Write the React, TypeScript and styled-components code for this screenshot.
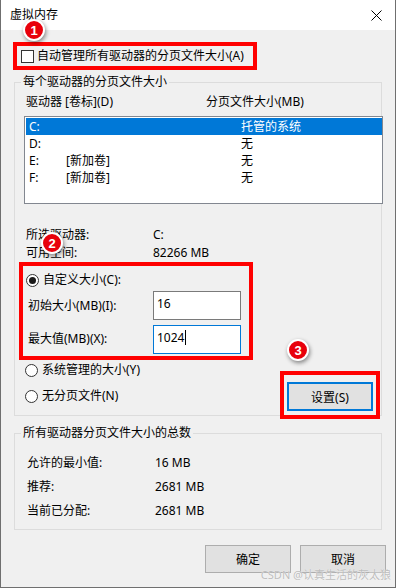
import styled, { createGlobalStyle } from 'styled-components'

const GlobalStyle = createGlobalStyle`
  html, body {
    margin: 0;
    padding: 0;
    background: #ffffff;
  }
  body {
    font-family: "Noto Sans", "Noto Sans CJK SC", sans-serif;
    font-size: 12px;
    color: #000;
  }
  * {
    box-sizing: border-box;
  }
`

const drives = [
  { letter: 'C:', label: '', size: '托管的系统', selected: true },
  { letter: 'D:', label: '', size: '无', selected: false },
  { letter: 'E:', label: '[新加卷]', size: '无', selected: false },
  { letter: 'F:', label: '[新加卷]', size: '无', selected: false },
]

const totals = [
  { label: '允许的最小值:', value: '16 MB' },
  { label: '推荐:', value: '2681 MB' },
  { label: '当前已分配:', value: '2681 MB' },
]

// numbered callouts drawn over the dialog
const badges = [
  { n: 1, x: 22, y: 19 },
  { n: 2, x: 40, y: 232 },
  { n: 3, x: 286, y: 339 },
]

const CloseIcon = () => (
  <svg width="11" height="11" viewBox="0 0 11 11">
    <path d="M0.5 0.5 L10.5 10.5 M10.5 0.5 L0.5 10.5" stroke="#000" strokeWidth="1" fill="none" />
  </svg>
)

const Radio = ({ checked }: { checked?: boolean }) => (
  <RadioCircle>{checked && <RadioDot />}</RadioCircle>
)

const App = () => {
  return (
    <>
      <GlobalStyle />
      <Window>
        <TitleBar>
          <Title>虚拟内存</Title>
          <CloseButton><CloseIcon /></CloseButton>
        </TitleBar>

        <Body>
          <CheckWrap>
            <CheckBox />
            <span>自动管理所有驱动器的分页文件大小(A)</span>
          </CheckWrap>

          <Group $top={16}>
            <Legend>每个驱动器的分页文件大小</Legend>
            <HeaderRow>
              <span>驱动器 [卷标](D)</span>
              <span>分页文件大小(MB)</span>
            </HeaderRow>
            <ListBox>
              {drives.map((d) => (
                <DriveRow key={d.letter} $selected={d.selected}>
                  <span>{d.letter}</span>
                  <span>{d.label}</span>
                  <span>{d.size}</span>
                </DriveRow>
              ))}
            </ListBox>

            <InfoGrid>
              <span>所选驱动器:</span>
              <span>C:</span>
              <span>可用空间:</span>
              <span>82266 MB</span>
            </InfoGrid>

            <CustomBox>
              <RadioRow>
                <Radio checked />
                <span>自定义大小(C):</span>
              </RadioRow>
              <FieldRow>
                <span>初始大小(MB)(I):</span>
                <Field>16</Field>
              </FieldRow>
              <FieldRow>
                <span>最大值(MB)(X):</span>
                <Field $focused>1024<Caret /></Field>
              </FieldRow>
            </CustomBox>

            <BottomRow>
              <RadioColumn>
                <RadioRow>
                  <Radio />
                  <span>系统管理的大小(Y)</span>
                </RadioRow>
                <RadioRow>
                  <Radio />
                  <span>无分页文件(N)</span>
                </RadioRow>
              </RadioColumn>
              <SetWrap>
                <SetButton>设置(S)</SetButton>
              </SetWrap>
            </BottomRow>
          </Group>

          <Group $top={17}>
            <Legend>所有驱动器分页文件大小的总数</Legend>
            <TotalsGrid>
              {totals.map((t) => (
                <TotalRow key={t.label}>
                  <span>{t.label}</span>
                  <span>{t.value}</span>
                </TotalRow>
              ))}
            </TotalsGrid>
          </Group>

          <ButtonRow>
            <DialogButton>确定</DialogButton>
            <DialogButton>取消</DialogButton>
          </ButtonRow>
        </Body>

        {badges.map((b) => (
          <Badge key={b.n} $x={b.x} $y={b.y}>{b.n}</Badge>
        ))}
        <Watermark>CSDN @认真生活的灰太狼</Watermark>
      </Window>
    </>
  )
}

const {
  Window, TitleBar, Title, CloseButton, Body, CheckWrap, CheckBox, Group, Legend,
  HeaderRow, ListBox, DriveRow, InfoGrid, CustomBox, RadioRow, RadioCircle, RadioDot,
  FieldRow, Field, Caret, BottomRow, RadioColumn, SetWrap, SetButton, TotalsGrid,
  TotalRow, ButtonRow, DialogButton, Badge, Watermark,
} = {
  Window: styled.div`
    position: relative;
    width: 396px;
    height: 588px;
    display: flex;
    flex-direction: column;
    background: #f0f0f0;
    border: 1px solid #6f6f6f;
    border-top: none;
    overflow: hidden;
  `,
  TitleBar: styled.div`
    height: 30px;
    flex: none;
    display: flex;
    align-items: center;
    justify-content: space-between;
    background: #ffffff;
    padding: 0 9px 0 9px;
  `,
  Title: styled.div`
    font-size: 12px;
    line-height: 16px;
  `,
  CloseButton: styled.div`
    width: 11px;
    height: 11px;
    display: flex;
    margin-right: 4px;
  `,
  Body: styled.div`
    flex: 1;
    display: flex;
    flex-direction: column;
    padding: 0 13px;
  `,
  CheckWrap: styled.div`
    margin: 16px 0 0 3px;
    width: 236px;
    height: 20px;
    display: flex;
    align-items: center;
    gap: 3px;
    padding-left: 4px;
    line-height: 16px;
    outline: 4px solid #ff0000;
  `,
  CheckBox: styled.div`
    width: 13px;
    height: 13px;
    border: 1px solid #333333;
    background: #ffffff;
    flex: none;
  `,
  Group: styled.div<{ $top: number }>`
    margin-top: ${(p) => p.$top}px;
    display: flex;
    flex-direction: column;
    border: 1px solid #dcdcdc;
  `,
  Legend: styled.div`
    align-self: flex-start;
    margin: -9px 0 0 6px;
    padding: 0 2px;
    background: #f0f0f0;
    line-height: 16px;
  `,
  HeaderRow: styled.div`
    margin-top: 4px;
    height: 16px;
    line-height: 16px;
    padding-left: 11px;
    display: grid;
    grid-template-columns: 180px 1fr;
  `,
  ListBox: styled.div`
    margin: 6px 0 0 9px;
    width: 359px;
    height: 88px;
    flex: none;
    background: #ffffff;
    border: 1px solid #828790;
    padding: 1px 0 0 1px;
  `,
  DriveRow: styled.div<{ $selected?: boolean }>`
    height: 17px;
    line-height: 17px;
    padding-left: 3px;
    display: grid;
    grid-template-columns: 37px 175px 1fr;
    background: ${(p) => (p.$selected ? '#0078d7' : 'transparent')};
    color: ${(p) => (p.$selected ? '#ffffff' : '#000000')};
  `,
  InfoGrid: styled.div`
    margin-top: 22px;
    padding-left: 11px;
    display: grid;
    grid-template-columns: 127px 1fr;
    grid-auto-rows: 18px;
    line-height: 18px;
  `,
  CustomBox: styled.div`
    margin-left: 4px;
    width: 234px;
    height: 98px;
    border: 4px solid #ff0000;
    display: flex;
    flex-direction: column;
    padding: 6px 8px 0 3px;
  `,
  RadioRow: styled.div`
    height: 16px;
    display: flex;
    align-items: center;
    gap: 4px;
    line-height: 16px;
  `,
  RadioCircle: styled.div`
    width: 13px;
    height: 13px;
    border-radius: 50%;
    border: 1px solid #333333;
    background: #ffffff;
    display: flex;
    align-items: center;
    justify-content: center;
    flex: none;
  `,
  RadioDot: styled.div`
    width: 7px;
    height: 7px;
    border-radius: 50%;
    background: #1a1a1a;
  `,
  FieldRow: styled.div`
    margin-top: 1px;
    height: 34px;
    display: grid;
    grid-template-columns: 125px 88px;
    align-items: center;
    padding-left: 2px;
    line-height: 16px;
    & + & {
      margin-top: 0;
    }
  `,
  Field: styled.div<{ $focused?: boolean }>`
    height: 29px;
    display: flex;
    align-items: center;
    padding: 0 0 3px 3px;
    background: #ffffff;
    border: 1px solid ${(p) => (p.$focused ? '#0078d7' : '#7a7a7a')};
    font-size: 12px;
  `,
  Caret: styled.span`
    display: inline-block;
    width: 1px;
    height: 15px;
    background: #000;
    margin-left: 1px;
  `,
  BottomRow: styled.div`
    display: flex;
    justify-content: space-between;
    align-items: flex-start;
    padding: 0 5px 0 10px;
  `,
  RadioColumn: styled.div`
    margin-top: 2px;
    display: flex;
    flex-direction: column;
    gap: 10px;
  `,
  SetWrap: styled.div`
    margin-top: 15px;
    padding: 7px 3px 4px 3px;
    outline: 4px solid #ff0000;
  `,
  SetButton: styled.div`
    width: 86px;
    height: 29px;
    display: flex;
    align-items: center;
    justify-content: center;
    background: #e1e1e1;
    border: 2px solid #0078d7;
  `,
  TotalsGrid: styled.div`
    margin-top: 10px;
    padding-bottom: 6px;
    display: flex;
    flex-direction: column;
  `,
  TotalRow: styled.div`
    height: 24px;
    line-height: 24px;
    padding-left: 12px;
    display: grid;
    grid-template-columns: 128px 1fr;
  `,
  ButtonRow: styled.div`
    margin: 15px -4px 0 0;
    display: flex;
    justify-content: flex-end;
    gap: 9px;
  `,
  DialogButton: styled.div`
    width: 86px;
    height: 28px;
    display: flex;
    align-items: center;
    justify-content: center;
    background: #e1e1e1;
    border: 1px solid #adadad;
  `,
  Badge: styled.div<{ $x: number; $y: number }>`
    position: absolute;
    left: ${(p) => p.$x}px;
    top: ${(p) => p.$y}px;
    width: 22px;
    height: 22px;
    border-radius: 50%;
    background: #e8000b;
    border: 2px solid #ffffff;
    box-shadow: 1px 2px 4px rgba(0, 0, 0, 0.45);
    color: #ffffff;
    font-family: "Liberation Sans", sans-serif;
    font-weight: 700;
    font-size: 13px;
    display: flex;
    align-items: center;
    justify-content: center;
  `,
  Watermark: styled.div`
    position: absolute;
    right: 4px;
    bottom: 6px;
    font-size: 11px;
    line-height: 13px;
    color: #bdbdbd;
    text-shadow: 0 0 1px #ffffff;
  `,
}

export default App
